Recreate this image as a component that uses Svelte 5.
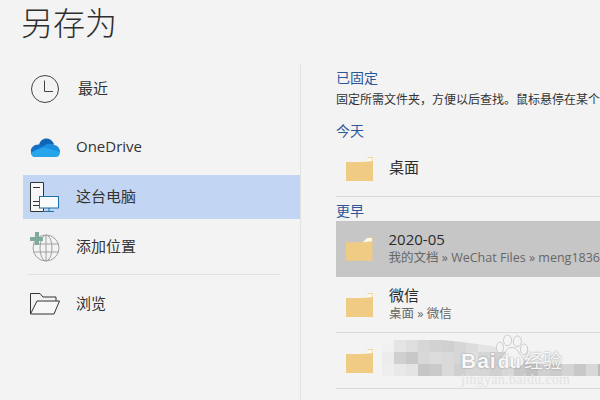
<script>
  const rows = [
    { name: '2020-05', path: '我的文档 » WeChat Files » meng1836', active: true },
    { name: '微信', path: '桌面 » 微信' }
  ];
  const shades = [
    'f0 e4 de d6 d2 d0 d6 dc e4 e4 e6 dc d6 f2 f2 f2 f2 f2 f2',
    'ec d0 c8 d8 dc da d6 e0 d6 d2 d0 c8 d8 e0 e4 e4 ec f0 f2',
    'ee e8 e4 c6 ca da d0 d6 d6 d0 d8 c8 c2 d0 cc d4 c8 d8 bc'
  ].map((r) => r.split(' '));
  const blur = shades.flatMap((r, y) =>
    r.map((c, x) => ({ x: x * 12, y: y * 12, c: `#${c}${c}${c}` }))
  );
</script>

{#snippet folder()}
  <svg class="folder" viewBox="0 0 27 24" width="27" height="24">
    <path d="M0 5 L17 5 L22 0 L27 0 L27 24 L0 24 Z" fill="#efcb83"/>
    <path d="M17 5 L21.5 .8 L26.5 .8 L26.5 4 Z" fill="#fbf8f0"/>
  </svg>
{/snippet}

<div class="page">
  <aside class="left">
    <h1>另存为</h1>
    <nav>
      <div class="item recent">
        <svg viewBox="0 0 30 30" width="30" height="30">
          <circle cx="15" cy="15" r="13.5" fill="none" stroke="#444" stroke-width="1"/>
          <path d="M14.5 6.5 V17.5 H23" fill="none" stroke="#444" stroke-width="1"/>
        </svg>
        <span class="gap-lg">最近</span>
      </div>
      <div class="item drive">
        <svg viewBox="0 0 30 20" width="30" height="20">
          <path d="M9 8 C10 1 20 -2 24 7 L20 15 L7 13 Z" fill="#0f65b5"/>
          <path d="M1 15 C0 10 6 6 11 8 L20 14 L16 20 L4 20 C2 19 1 17 1 15 Z" fill="#1470c4"/>
          <path d="M13 10 C15 6 21 6 24 8 C28 8 30 12 30 15 L19 15 Z" fill="#1c8ee0"/>
          <path d="M5 20 C3 20 1 18 1 16 C2 15 4 14 6 13 L13 10 L30 15 C30 18 28 20 26 20 Z" fill="#27a5ea"/>
        </svg>
        <span>OneDrive</span>
      </div>
      <div class="item active">
        <svg viewBox="0 0 30 30" width="30" height="30">
          <path d="M.5 .5 H13.5 V29.5 H.5 Z" fill="#f7f7f7" stroke="#333"/>
          <path d="M3 5.5 H10 M3 19.5 H10 M3 23.5 H10" stroke="#333"/>
          <rect x="9.5" y="14.5" width="19" height="11.5" fill="#f8fafc" stroke="#1f6fa8"/>
          <path d="M19 26 V29 M14 29.5 H24" stroke="#1f6fa8"/>
        </svg>
        <span>这台电脑</span>
      </div>
      <div class="item add">
        <svg viewBox="0 0 30 30" width="30" height="30">
          <g fill="none" stroke="#a0a0a0" stroke-width="1">
            <circle cx="16" cy="16" r="13"/>
            <ellipse cx="16" cy="16" rx="6" ry="13"/>
            <path d="M16 3 V29 M3.5 12 H28.5 M3.5 20 H28.5"/>
          </g>
          <path d="M5 0 H9 V5 H13 V9 H9 V13 H5 V9 H0 V5 H5 Z" fill="#7fab9b"/>
        </svg>
        <span>添加位置</span>
      </div>
      <hr />
      <div class="item browse">
        <svg viewBox="0 0 30 22" width="30" height="22">
          <path d="M.5 21 V.5 H10 L13 4 H26 V8" fill="none" stroke="#333"/>
          <path d="M.5 21 L7 8 H29.5 L24 21 Z" fill="#f7f7f7" stroke="#333"/>
        </svg>
        <span>浏览</span>
      </div>
    </nav>
  </aside>

  <main class="right">
    <h2>已固定</h2>
    <p class="desc">固定所需文件夹，方便以后查找。鼠标悬停在某个</p>
    <h2 class="today">今天</h2>
    <div class="file single">
      {@render folder()}
      <div class="name">桌面</div>
    </div>
    <h2 class="earlier">更早</h2>
    {#each rows as row}
      <div class="file" class:current={row.active}>
        {@render folder()}
        <div>
          <div class="name">{row.name}</div>
          <div class="path">{row.path}</div>
        </div>
      </div>
    {/each}
    <div class="file">
      {@render folder()}
    </div>
  </main>

  <div class="mosaic">
    {#each blur as b}
      <i style="left:{b.x}px;top:{b.y}px;background:{b.c}"></i>
    {/each}
  </div>
  <div class="mark">
    <svg viewBox="0 0 36 38" width="34" height="34" class="paw">
      <g fill="#f4f4f4" stroke="#bbb" stroke-width=".8">
        <ellipse cx="4.5" cy="14" rx="4" ry="6"/>
        <ellipse cx="13" cy="6" rx="4.5" ry="6"/>
        <ellipse cx="24" cy="7" rx="4.5" ry="6"/>
        <ellipse cx="31.5" cy="16" rx="4" ry="6"/>
        <path d="M18 14 C11 14 12 20 7 24 C2 29 5 36 12 36 H24 C31 36 34 29 29 24 C24 20 25 14 18 14 Z"/>
      </g>
    </svg>
    <div class="brand"><span>Bai</span><span class="du">du</span><span class="jy">经验</span></div>
    <div class="url">jingyan.baidu.com</div>
  </div>
</div>

<style>
  :global(body) {
    margin: 0;
  }
  .page {
    position: relative;
    width: 600px;
    height: 400px;
    overflow: hidden;
    display: flex;
    background: #f3f3f3;
    color: #333;
    font-family: "Open Sans", "Noto Sans CJK SC", sans-serif;
  }
  .left {
    width: 300px;
    flex: none;
    position: relative;
  }
  .left::after {
    content: "";
    position: absolute;
    left: 300px;
    top: 63px;
    bottom: 0;
    width: 1px;
    background: #e2e2e2;
  }
  h1 {
    margin: 0;
    padding: 2px 0 0 21px;
    height: 70px;
    box-sizing: border-box;
    font-size: 32px;
    line-height: 42px;
    font-weight: 300;
    color: #2e2e2e;
  }
  nav {
    margin-left: 23px;
  }
  .item {
    display: flex;
    align-items: center;
    gap: 16px;
    padding-left: 7px;
    font-size: 15px;
    line-height: 18px;
    color: #333;
  }
  .item span {
    position: relative;
    top: -1px;
  }
  .item.recent { height: 40px; margin-top: -1px; }
  .item.drive { height: 44px; margin-top: 16px; }
  .item.active { height: 44px; margin-top: 6px; background: #c2d5f2; }
  .item.add { height: 44px; margin-top: 6px; }
  .item.browse { height: 44px; margin-top: 7px; }
  .gap-lg { margin-left: 2px; }
  .item svg { flex: none; }
  hr {
    margin: 5px 20px 0 5px;
    border: 0;
    border-top: 1px solid #e1e1e1;
  }
  .right {
    flex: 1;
    min-width: 0;
    padding: 68px 0 0 36px;
    white-space: nowrap;
  }
  h2 {
    margin: 0;
    font-size: 14px;
    line-height: 20px;
    font-weight: 400;
    color: #2b579a;
  }
  .desc {
    margin: 2px 0 0;
    font-size: 12px;
    line-height: 20px;
    color: #333;
  }
  .today { margin-top: 11px; }
  .earlier { margin-top: 4px; }
  .file {
    display: flex;
    align-items: center;
    gap: 16px;
    height: 55px;
    padding-left: 10px;
    border-bottom: 1px solid #d9d9d9;
  }
  .file.current {
    background: #c6c6c6;
    border-bottom-color: #c6c6c6;
  }
  .name {
    font-size: 15px;
    line-height: 19px;
    color: #2b2b2b;
    position: relative;
    top: -1px;
  }
  .path {
    font-size: 12.5px;
    line-height: 16px;
    color: #666;
  }
  .mosaic {
    position: absolute;
    left: 382px;
    top: 340px;
    width: 218px;
    height: 36px;
    overflow: hidden;
    clip-path: polygon(0 8px, 12px 0, 60px 0, 80px 2px, 110px 6px, 150px 24px, 218px 24px, 218px 36px, 0 36px);
  }
  .mosaic i {
    position: absolute;
    width: 12px;
    height: 12px;
  }
  .mark {
    position: absolute;
    left: 460px;
    top: 336px;
    width: 110px;
    height: 60px;
    color: #f8f8f8;
  }
  .paw {
    position: absolute;
    left: 35px;
    top: -1px;
  }
  .brand {
    position: absolute;
    left: 1px;
    top: 14px;
    font-family: "Liberation Sans", sans-serif;
    font-size: 21px;
    line-height: 22px;
    font-weight: 700;
    letter-spacing: 1px;
    white-space: nowrap;
    text-shadow: 0 0 2px #8a8a8a;
  }
  .du {
    margin-left: 1px;
    font-size: 19px;
    letter-spacing: 0;
  }
  .jy {
    margin-left: 3px;
    font-family: "Liberation Sans", "Noto Sans CJK SC", sans-serif;
    font-size: 19px;
    font-weight: 400;
    letter-spacing: 0;
  }
  .url {
    position: absolute;
    left: 1px;
    top: 37px;
    font-family: "Liberation Serif", serif;
    font-size: 14px;
    line-height: 14px;
    letter-spacing: .3px;
    white-space: nowrap;
    color: #e2e2e2;
  }
</style>
